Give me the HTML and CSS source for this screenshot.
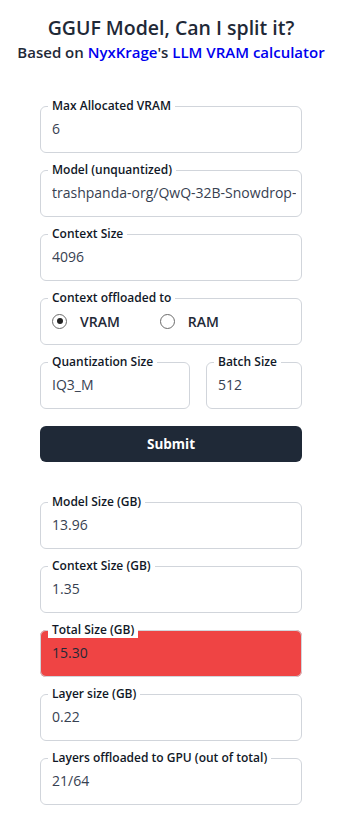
FILE: index.html
```html
<!DOCTYPE html>
<html>
<head>
<meta charset="utf-8">
<link rel="stylesheet" href="styles.css">
</head>
<body>
<header class="head">
  <h1 class="title">GGUF Model, Can I split it?</h1>
  <p class="sub">Based on <a class="link" href="#">NyxKrage</a>'s <a class="link" href="#">LLM VRAM calculator</a></p>
</header>
<main class="wrap">
  <form class="form">
    <fieldset class="box"><legend class="lg">Max Allocated VRAM</legend><div class="val">6</div></fieldset>
    <fieldset class="box"><legend class="lg">Model (unquantized)</legend><div class="val">trashpanda-org/QwQ-32B-Snowdrop-v0.5</div></fieldset>
    <fieldset class="box"><legend class="lg">Context Size</legend><div class="val">4096</div></fieldset>
    <fieldset class="box"><legend class="lg">Context offloaded to</legend>
      <div class="radios">
        <label class="radio"><span class="dot on"></span><span class="rl">VRAM</span></label>
        <label class="radio"><span class="dot"></span><span class="rl">RAM</span></label>
      </div>
    </fieldset>
    <div class="row">
      <fieldset class="box"><legend class="lg">Quantization Size</legend><div class="val">IQ3_M</div></fieldset>
      <fieldset class="box"><legend class="lg">Batch Size</legend><div class="val">512</div></fieldset>
    </div>
    <button class="btn" type="button">Submit</button>
  </form>
  <section class="results">
    <fieldset class="box"><legend class="lg">Model Size (GB)</legend><div class="val">13.96</div></fieldset>
    <fieldset class="box"><legend class="lg">Context Size (GB)</legend><div class="val">1.35</div></fieldset>
    <fieldset class="box red"><legend class="lg white">Total Size (GB)</legend><div class="val">15.30</div></fieldset>
    <fieldset class="box"><legend class="lg">Layer size (GB)</legend><div class="val">0.22</div></fieldset>
    <fieldset class="box"><legend class="lg">Layers offloaded to GPU (out of total)</legend><div class="val">21/64</div></fieldset>
  </section>
</main>
</body>
</html>
```
FILE: styles.css
```css
* { box-sizing: border-box; }
body {
  margin: 0;
  background: #ffffff;
  font-family: "Open Sans", "Noto Sans", sans-serif;
  color: #1f2937;
}
.head {
  text-align: center;
  padding-top: 16px;
  padding-left: 3px;
}
.title {
  margin: 0;
  font-size: 19.5px;
  line-height: 24px;
  font-weight: 600;
  color: #1f2937;
}
.sub {
  margin: 0;
  font-size: 15px;
  line-height: 24px;
  font-weight: 600;
  color: #1f2937;
  white-space: nowrap;
}
.link { color: #0000ee; text-decoration: none; }
.wrap {
  width: 262px;
  margin: 34px 0 0 40px;
}
.form, .results {
  display: flex;
  flex-direction: column;
  gap: 9px;
}
.results { margin-top: 32px; }
.box {
  margin: 0;
  min-width: 0;
  border: 1px solid #d1d5db;
  border-radius: 6px;
  padding: 0 5px 13px 11px;
}
.lg {
  margin-left: -4px;
  padding: 0 4px;
  font-size: 12px;
  line-height: 16px;
  font-weight: 600;
  color: #111827;
}
.val {
  margin-top: 5px;
  height: 20px;
  font-size: 14px;
  line-height: 20px;
  color: #374151;
  white-space: nowrap;
  overflow: hidden;
}
.radios {
  margin-top: 5px;
  height: 20px;
  display: flex;
  align-items: center;
  gap: 40px;
}
.radio {
  display: flex;
  align-items: center;
  gap: 13px;
}
.dot {
  width: 15px;
  height: 15px;
  border: 1.5px solid #6b6b6b;
  border-radius: 50%;
  display: flex;
  align-items: center;
  justify-content: center;
}
.dot.on::after {
  content: "";
  width: 6px;
  height: 6px;
  border-radius: 50%;
  background: #222;
}
.rl {
  font-size: 14px;
  font-weight: 600;
  color: #1f2937;
}
.row {
  display: grid;
  grid-template-columns: 150px 1fr;
  gap: 16px;
}
.btn {
  margin-top: 8px;
  height: 36px;
  border: none;
  border-radius: 6px;
  background: #1f2937;
  color: #ffffff;
  font-family: inherit;
  font-size: 13.5px;
  font-weight: 700;
}
.red { background: #ef4444; }
.red .val { color: #1f2937; }
.white { background: #ffffff; }
```
